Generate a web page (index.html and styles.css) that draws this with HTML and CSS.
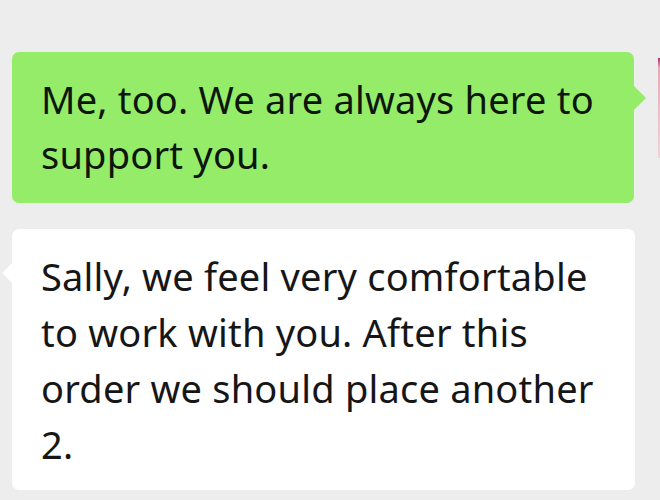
FILE: index.html
```html
<!DOCTYPE html>
<html>
<head>
<meta charset="utf-8">
<link rel="stylesheet" href="styles.css">
</head>
<body>
<div class="chat">
  <div class="row row-me">
    <div class="bubble bubble-me">Me, too. We are always here to support you.</div>
  </div>
  <div class="row row-other">
    <div class="bubble bubble-other">Sally, we feel very comfortable to work with you. After this order we should place another 2.</div>
  </div>
  <div class="avatar-edge"></div>
</div>
</body>
</html>
```
FILE: styles.css
```css
html, body {
  margin: 0;
  padding: 0;
  background: #ededed;
}
.chat {
  position: relative;
  width: 660px;
  height: 500px;
  overflow: hidden;
  padding: 52px 0 0 12px;
  box-sizing: border-box;
  display: flex;
  flex-direction: column;
  gap: 26px;
  font-family: "Noto Sans", "Open Sans", sans-serif;
}
.row {
  display: flex;
}
.bubble {
  position: relative;
  box-sizing: border-box;
  border-radius: 7px;
  font-size: 38px;
  letter-spacing: 0.2px;
  line-height: 55px;
  color: #161616;
}
.bubble-me {
  width: 622px;
  height: 151px;
  background: #95ec69;
  padding: 20px 20px 0 29px;
  color: #0c160a;
}
.bubble-me::after {
  content: "";
  position: absolute;
  right: -12px;
  top: 34px;
  border-top: 12px solid transparent;
  border-bottom: 12px solid transparent;
  border-left: 12px solid #95ec69;
}
.bubble-other {
  width: 623px;
  height: 261px;
  background: #ffffff;
  padding: 19px 20px 0 29px;
  line-height: 56px;
}
.bubble-other::before {
  content: "";
  position: absolute;
  left: -10px;
  top: 34px;
  border-top: 10px solid transparent;
  border-bottom: 10px solid transparent;
  border-right: 10px solid #ffffff;
}
.avatar-edge {
  position: absolute;
  right: 0;
  top: 58px;
  width: 2px;
  height: 100px;
  background: linear-gradient(#b0306a 0, #e7a9b8 10px, #f1d3d8 100%);
}
```
